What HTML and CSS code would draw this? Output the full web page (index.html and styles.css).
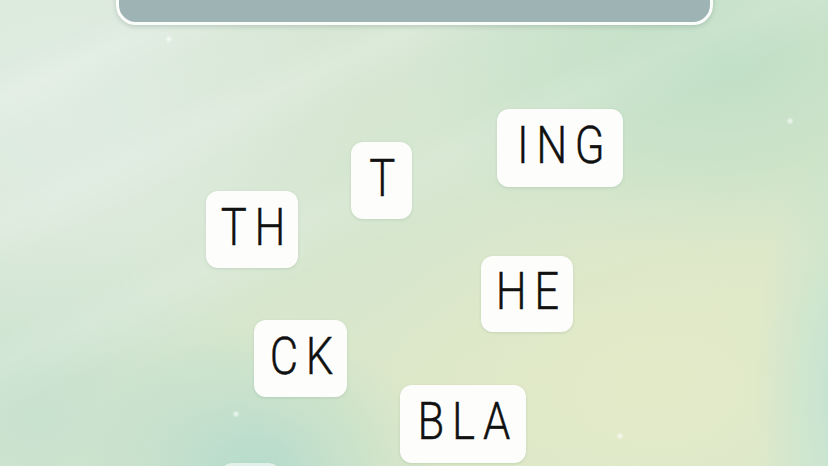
FILE: index.html
```html
<!DOCTYPE html>
<html>
<head>
<meta charset="utf-8">
<link rel="stylesheet" href="styles.css">
</head>
<body>
<div class="stage">
  <div class="rays"></div>
  <div class="top"><div class="panel"></div></div>
  <span class="spark s1"></span>
  <span class="spark s2"></span>
  <span class="spark s3"></span>
  <span class="spark s4"></span>
  <div class="tile t-ing"><span class="txt">ING</span></div>
  <div class="tile t-t"><span class="txt">T</span></div>
  <div class="tile t-th"><span class="txt">TH</span></div>
  <div class="tile t-he"><span class="txt">HE</span></div>
  <div class="tile t-ck"><span class="txt">CK</span></div>
  <div class="tile t-bla"><span class="txt">BLA</span></div>
  <div class="tile t-part"></div>
</div>
</body>
</html>
```
FILE: styles.css
```css
html, body { margin: 0; padding: 0; }
body { font-family: Roboto, "Noto Sans", sans-serif; }
.stage {
  position: relative;
  width: 828px;
  height: 466px;
  overflow: hidden;
  background:
    radial-gradient(ellipse 180px 140px at 260px 470px, rgba(178,218,205,0.9), rgba(178,218,205,0) 100%),
    radial-gradient(ellipse 90px 260px at 845px 390px, rgba(190,226,212,0.9), rgba(190,226,212,0) 100%),
    radial-gradient(ellipse 320px 220px at 660px 390px, rgba(228,234,200,0.9), rgba(228,234,200,0) 100%),
    radial-gradient(ellipse 320px 200px at 720px 60px, rgba(192,223,198,1), rgba(192,223,198,0) 100%),
    radial-gradient(ellipse 300px 260px at 60px 120px, rgba(224,236,226,1), rgba(224,236,226,0) 100%),
    radial-gradient(ellipse 260px 200px at 40px 420px, rgba(196,224,208,0.8), rgba(196,224,208,0) 100%),
    linear-gradient(160deg, #d9e8d9 0%, #d5e6cf 45%, #dde8c8 75%, #d8e8cc 100%);
}
.rays {
  position: absolute;
  inset: 0;
  background:
    linear-gradient(155deg, rgba(255,255,255,0) 0px, rgba(255,255,255,0) 60px, rgba(255,255,255,0.16) 90px, rgba(255,255,255,0) 130px, rgba(255,255,255,0) 170px, rgba(255,255,255,0.13) 200px, rgba(255,255,255,0) 240px, rgba(255,255,255,0) 300px, rgba(255,255,255,0.1) 330px, rgba(255,255,255,0) 380px);
}
.top {
  position: relative;
  display: flex;
  justify-content: center;
  padding-left: 1px;
}
.panel {
  width: 591px;
  height: 60px;
  margin-top: -41px;
  background: #9db3b4;
  border: 3px solid #fbfdfb;
  border-radius: 20px;
  box-shadow: 0 2px 4px rgba(90,120,110,0.25);
}
.tile {
  position: absolute;
  box-sizing: border-box;
  display: flex;
  align-items: center;
  justify-content: center;
  background: #fdfefc;
  border-radius: 12px;
  box-shadow: 0 1px 3px rgba(120,150,130,0.25);
  color: #111;
  font-size: 52px;
  font-weight: 300;
  line-height: 1;
  padding-bottom: 4px;
}
.txt {
  display: inline-block;
  transform: scaleX(0.84);
  letter-spacing: 9px;
  margin-right: -9px;
  -webkit-text-stroke: 0.4px #111;
}
.t-ing { left: 497px; top: 109px; width: 126px; height: 78px; }
.t-t { left: 351px; top: 142px; width: 61px; height: 77px; }
.t-th { left: 206px; top: 191px; width: 92px; height: 77px; }
.t-he { left: 481px; top: 256px; width: 92px; height: 76px; }
.t-ck { left: 254px; top: 320px; width: 93px; height: 77px; }
.t-bla { left: 400px; top: 385px; width: 126px; height: 78px; }
.t-part { left: 220px; top: 463px; width: 61px; height: 77px; opacity: 0.6; }
.spark {
  position: absolute;
  width: 8px;
  height: 8px;
  border-radius: 50%;
  background: radial-gradient(circle, rgba(255,255,255,0.8), rgba(255,255,255,0) 70%);
}
.s1 { left: 165px; top: 35px; }
.s2 { left: 786px; top: 117px; }
.s3 { left: 232px; top: 410px; }
.s4 { left: 616px; top: 432px; }
```
